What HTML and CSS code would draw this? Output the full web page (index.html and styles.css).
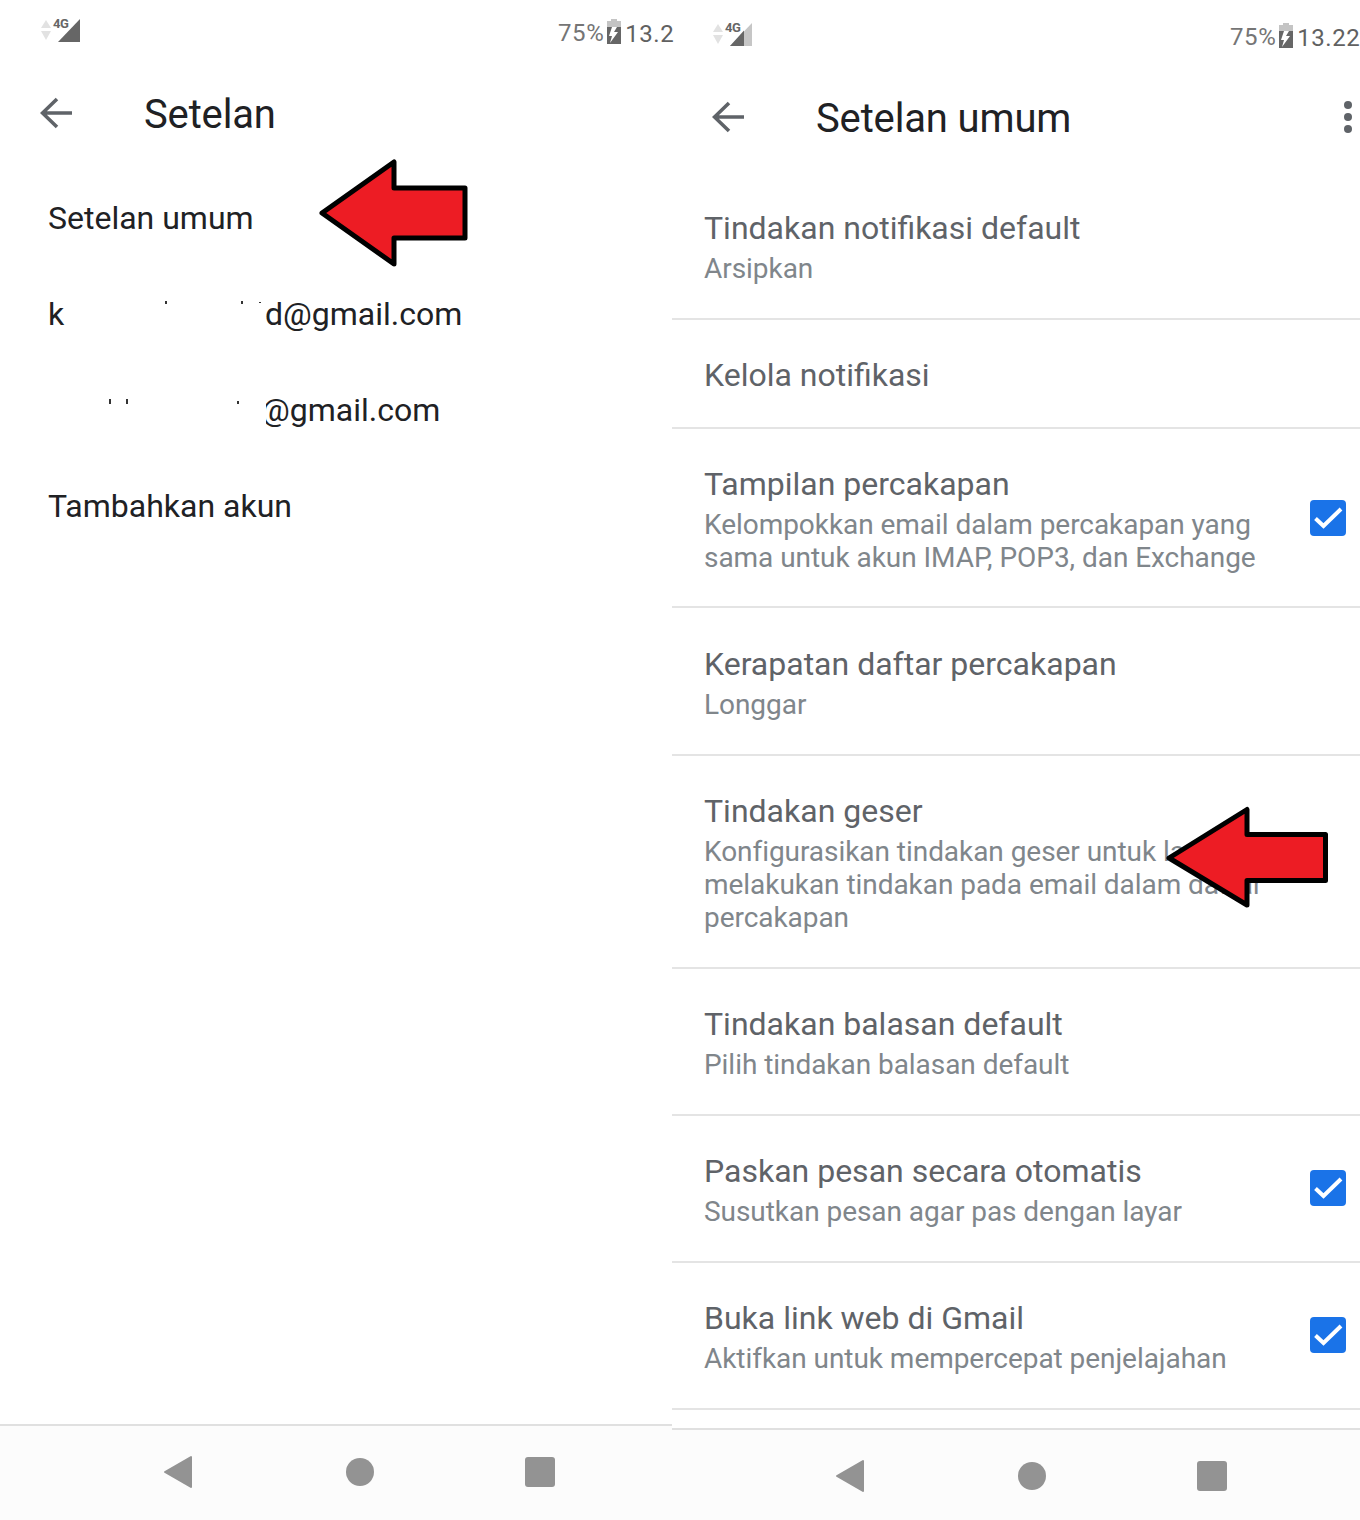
FILE: index.html
```html
<!DOCTYPE html>
<html lang="en">
<head>
    <meta charset="UTF-8">
    <title>Setelan</title>
    <link rel="stylesheet" href="styles.css">
</head>
<body>
<div class="screens">

    <!-- Left screen -->
    <div class="phone phone-left">
        <div class="statusbar">
            <svg class="net" width="44" height="28" viewBox="0 0 44 28">
                <path d="M5 3 L10 11 H0 Z M0 14 H10 L5 23 Z" fill="#e2e2e2"/>
                <path d="M39 2 V25 H17 Z" fill="#666"/>
                <text x="12" y="10.5" class="net-text">4G</text>
            </svg>
            <span class="percent">75%</span>
            <svg class="battery" width="14" height="25" viewBox="0 0 14 25">
                <path d="M4 0 H10 V2 H14 V8 H0 V2 H4 Z" fill="#c4c4c4"/>
                <path d="M0 8 H14 V25 H0 Z" fill="#666"/>
                <path d="M10 8 H5 L2 17 H5 L3 24 L11 13 H7 Z" fill="#fff"/>
            </svg>
            <span class="clock">13.2</span>
        </div>
        <div class="appbar">
            <svg class="back" width="34" height="32" viewBox="0 0 34 32">
                <path d="M32 16 H3 M17 2 L2.5 16 L17 30" fill="none" stroke="#5f6368" stroke-width="3.6"/>
            </svg>
            <h1>Setelan</h1>
        </div>
        <ul class="account-list">
            <li>Setelan umum</li>
            <li class="masked">
                <span class="mask-head">k</span>
                <i class="speck speck-a"></i><i class="speck speck-b"></i><i class="speck speck-c"></i>
                <span>d@gmail.com</span>
            </li>
            <li class="masked">
                <span class="mask-head mask-head-short"></span>
                <i class="speck speck-d"></i><i class="speck speck-e"></i><i class="speck speck-f"></i>
                <span>@gmail.com</span>
                <i class="mask-cover"></i>
            </li>
            <li>Tambahkan akun</li>
        </ul>
        <div class="navbar">
            <svg width="30" height="34" viewBox="0 0 30 34"><path d="M28 2 V32 L2 17 Z" fill="#939393" stroke="#939393" stroke-width="2" stroke-linejoin="round"/></svg>
            <span class="nav-circle"></span>
            <span class="nav-square"></span>
        </div>
    </div>

    <!-- Right screen -->
    <div class="phone phone-right">
        <div class="statusbar">
            <svg class="net" width="44" height="28" viewBox="0 0 44 28">
                <path d="M5 3 L10 11 H0 Z M0 14 H10 L5 23 Z" fill="#e2e2e2"/>
                <path d="M39 2 V25 H17 Z" fill="#c6c6c6"/>
                <path d="M31 9.5 V25 H17 Z" fill="#666"/>
                <text x="12" y="10.5" class="net-text">4G</text>
            </svg>
            <span class="percent">75%</span>
            <svg class="battery" width="14" height="25" viewBox="0 0 14 25">
                <path d="M4 0 H10 V2 H14 V8 H0 V2 H4 Z" fill="#c4c4c4"/>
                <path d="M0 8 H14 V25 H0 Z" fill="#666"/>
                <path d="M10 8 H5 L2 17 H5 L3 24 L11 13 H7 Z" fill="#fff"/>
            </svg>
            <span class="clock">13.22</span>
        </div>
        <div class="appbar">
            <svg class="back" width="34" height="32" viewBox="0 0 34 32">
                <path d="M32 16 H3 M17 2 L2.5 16 L17 30" fill="none" stroke="#5f6368" stroke-width="3.6"/>
            </svg>
            <h1>Setelan umum</h1>
            <div class="more"><span></span><span></span><span></span></div>
        </div>
        <div class="settings">
            <div class="row">
                <div class="row-text">
                    <div class="row-title">Tindakan notifikasi default</div>
                    <div class="row-sub">Arsipkan</div>
                </div>
            </div>
            <div class="row row-single">
                <div class="row-text">
                    <div class="row-title">Kelola notifikasi</div>
                </div>
            </div>
            <div class="row row-tight">
                <div class="row-text">
                    <div class="row-title">Tampilan percakapan</div>
                    <div class="row-sub">Kelompokkan email dalam percakapan yang<br>sama untuk akun IMAP, POP3, dan Exchange</div>
                </div>
                <svg class="checkbox" width="36" height="36" viewBox="0 0 36 36">
                    <rect width="36" height="36" rx="4" fill="#1a73e8"/>
                    <path d="M5.5 18.5 L13.5 26 L31 9" fill="none" stroke="#fff" stroke-width="4"/>
                </svg>
            </div>
            <div class="row row-loose">
                <div class="row-text">
                    <div class="row-title">Kerapatan daftar percakapan</div>
                    <div class="row-sub">Longgar</div>
                </div>
            </div>
            <div class="row">
                <div class="row-text">
                    <div class="row-title">Tindakan geser</div>
                    <div class="row-sub">Konfigurasikan tindakan geser untuk lanjut<br>melakukan tindakan pada email dalam daftar<br>percakapan</div>
                </div>
            </div>
            <div class="row">
                <div class="row-text">
                    <div class="row-title">Tindakan balasan default</div>
                    <div class="row-sub">Pilih tindakan balasan default</div>
                </div>
            </div>
            <div class="row">
                <div class="row-text">
                    <div class="row-title">Paskan pesan secara otomatis</div>
                    <div class="row-sub">Susutkan pesan agar pas dengan layar</div>
                </div>
                <svg class="checkbox" width="36" height="36" viewBox="0 0 36 36">
                    <rect width="36" height="36" rx="4" fill="#1a73e8"/>
                    <path d="M5.5 18.5 L13.5 26 L31 9" fill="none" stroke="#fff" stroke-width="4"/>
                </svg>
            </div>
            <div class="row">
                <div class="row-text">
                    <div class="row-title">Buka link web di Gmail</div>
                    <div class="row-sub">Aktifkan untuk mempercepat penjelajahan</div>
                </div>
                <svg class="checkbox" width="36" height="36" viewBox="0 0 36 36">
                    <rect width="36" height="36" rx="4" fill="#1a73e8"/>
                    <path d="M5.5 18.5 L13.5 26 L31 9" fill="none" stroke="#fff" stroke-width="4"/>
                </svg>
            </div>
        </div>
        <div class="navbar">
            <svg width="30" height="34" viewBox="0 0 30 34"><path d="M28 2 V32 L2 17 Z" fill="#939393" stroke="#939393" stroke-width="2" stroke-linejoin="round"/></svg>
            <span class="nav-circle"></span>
            <span class="nav-square"></span>
        </div>
    </div>

    <!-- Red arrows pasted over the screenshots -->
    <svg class="callout callout-left" width="150" height="110" viewBox="0 0 150 110">
        <path d="M3 54 L75 3 V29 H146 V79 H75 V105 Z" fill="#ed1c24" stroke="#000" stroke-width="5" stroke-linejoin="round"/>
    </svg>
    <svg class="callout callout-right" width="164" height="104" viewBox="0 0 164 104">
        <path d="M4 53 L82 4.5 V29.5 H160.5 V75.5 H82 V100 Z" fill="#ed1c24" stroke="#000" stroke-width="5" stroke-linejoin="round"/>
    </svg>
</div>
</body>
</html>
```

FILE: styles.css
```css
/* Reset */
body, h1, ul {
    margin: 0;
    padding: 0;
}

body {
    background-color: #fff;
    font-family: 'Roboto', sans-serif;
    overflow: hidden;
}

.screens {
    position: relative;
    display: flex;
    width: 1360px;
    height: 1520px;
    overflow: hidden;
}

.phone {
    display: flex;
    flex-direction: column;
    height: 1520px;
    box-sizing: border-box;
    overflow: hidden;
}

.phone-left {
    width: 672px;
    overflow: visible;
}

.phone-right {
    width: 688px;
    padding-top: 4px;
}

/* Status bar */
.statusbar {
    display: flex;
    align-items: center;
    height: 60px;
    padding: 6px 0 0 41px;
    box-sizing: border-box;
    white-space: nowrap;
}

.net {
    flex: none;
    margin-top: -4px;
}

.net-text {
    font-family: 'Roboto', sans-serif;
    font-size: 13px;
    font-weight: 700;
    fill: #666;
    letter-spacing: -0.5px;
}

.percent {
    margin-left: 473px;
    font-size: 24px;
    color: #757575;
    letter-spacing: 0.6px;
}

.battery {
    flex: none;
    margin-left: 3px;
    margin-top: -4px;
}

.clock {
    margin-left: 4px;
    margin-top: 2px;
    font-size: 24px;
    color: #616161;
    letter-spacing: 0.5px;
}

/* App bar */
.appbar {
    display: flex;
    align-items: center;
    height: 108px;
    padding-left: 40px;
    position: relative;
}

.appbar h1 {
    margin-left: 70px;
    font-size: 40px;
    font-weight: 400;
    color: #202124;
    letter-spacing: -0.15px;
}

.back {
    flex: none;
    margin-top: -3px;
}

.more {
    margin-left: auto;
    margin-right: 8px;
    margin-top: -2px;
    display: flex;
    flex-direction: column;
    gap: 4px;
}

.more span {
    width: 8px;
    height: 8px;
    border-radius: 50%;
    background-color: #5f6368;
}

/* Left list */
.account-list {
    list-style: none;
    flex: 1;
    padding-top: 2px;
}

.account-list li {
    display: flex;
    align-items: center;
    height: 96px;
    padding-left: 48px;
    font-size: 32px;
    color: #202124;
    position: relative;
}

.mask-head {
    width: 217px;
}

.mask-head-short {
    width: 213px;
}

.speck {
    position: absolute;
    width: 2px;
    height: 3px;
    background-color: #333;
}

.speck-a { left: 165px; top: 35px; }
.speck-b { left: 241px; top: 35px; }
.speck-c { left: 259px; top: 36px; height: 1px; }
.speck-d { left: 109px; top: 37px; height: 5px; }
.speck-e { left: 126px; top: 37px; height: 5px; }
.speck-f { left: 237px; top: 39px; }

/* white block hiding the start of the address */
.mask-cover {
    position: absolute;
    left: 255px;
    top: 20px;
    width: 11px;
    height: 60px;
    background-color: #fff;
}

/* Right list */
.settings {
    flex: 1;
    overflow: hidden;
    padding-top: 1px;
}

.row {
    display: flex;
    align-items: center;
    box-sizing: border-box;
    padding: 35px 14px 33px 32px;
    border-bottom: 2px solid #e4e4e4;
}

.row-single,
.row-tight {
    padding-bottom: 32px;
}

.row-loose {
    padding-top: 36px;
}

.row-text {
    flex: 1;
}

.row-title {
    font-size: 32px;
    line-height: 40px;
    color: #5f6368;
    margin-bottom: 4px;
}

.row-single .row-title {
    margin-bottom: 0;
}

.row-sub {
    font-size: 28px;
    line-height: 33px;
    color: #80868b;
    white-space: nowrap;
    letter-spacing: -0.05px;
}

.checkbox {
    flex: none;
    margin-top: -4px;
}

.row-tight .checkbox {
    margin-top: -2px;
}

/* Android nav bar */
.navbar {
    flex: none;
    display: flex;
    align-items: center;
    height: 96px;
    padding-left: 163px;
    padding-bottom: 2px;
    box-sizing: border-box;
    background-color: #fcfcfc;
    border-top: 2px solid #e0e0e0;
}

.phone-right .navbar {
    height: 92px;
    padding-bottom: 0;
    padding-top: 2px;
}

.nav-circle {
    width: 28px;
    height: 28px;
    margin-left: 153px;
    border-radius: 50%;
    background-color: #939393;
}

.nav-square {
    width: 30px;
    height: 30px;
    margin-left: 151px;
    border-radius: 3px;
    background-color: #939393;
}

/* Arrows */
.callout {
    position: absolute;
}

.callout-left {
    left: 319px;
    top: 159px;
}

.callout-right {
    left: 1165px;
    top: 805px;
}
```
